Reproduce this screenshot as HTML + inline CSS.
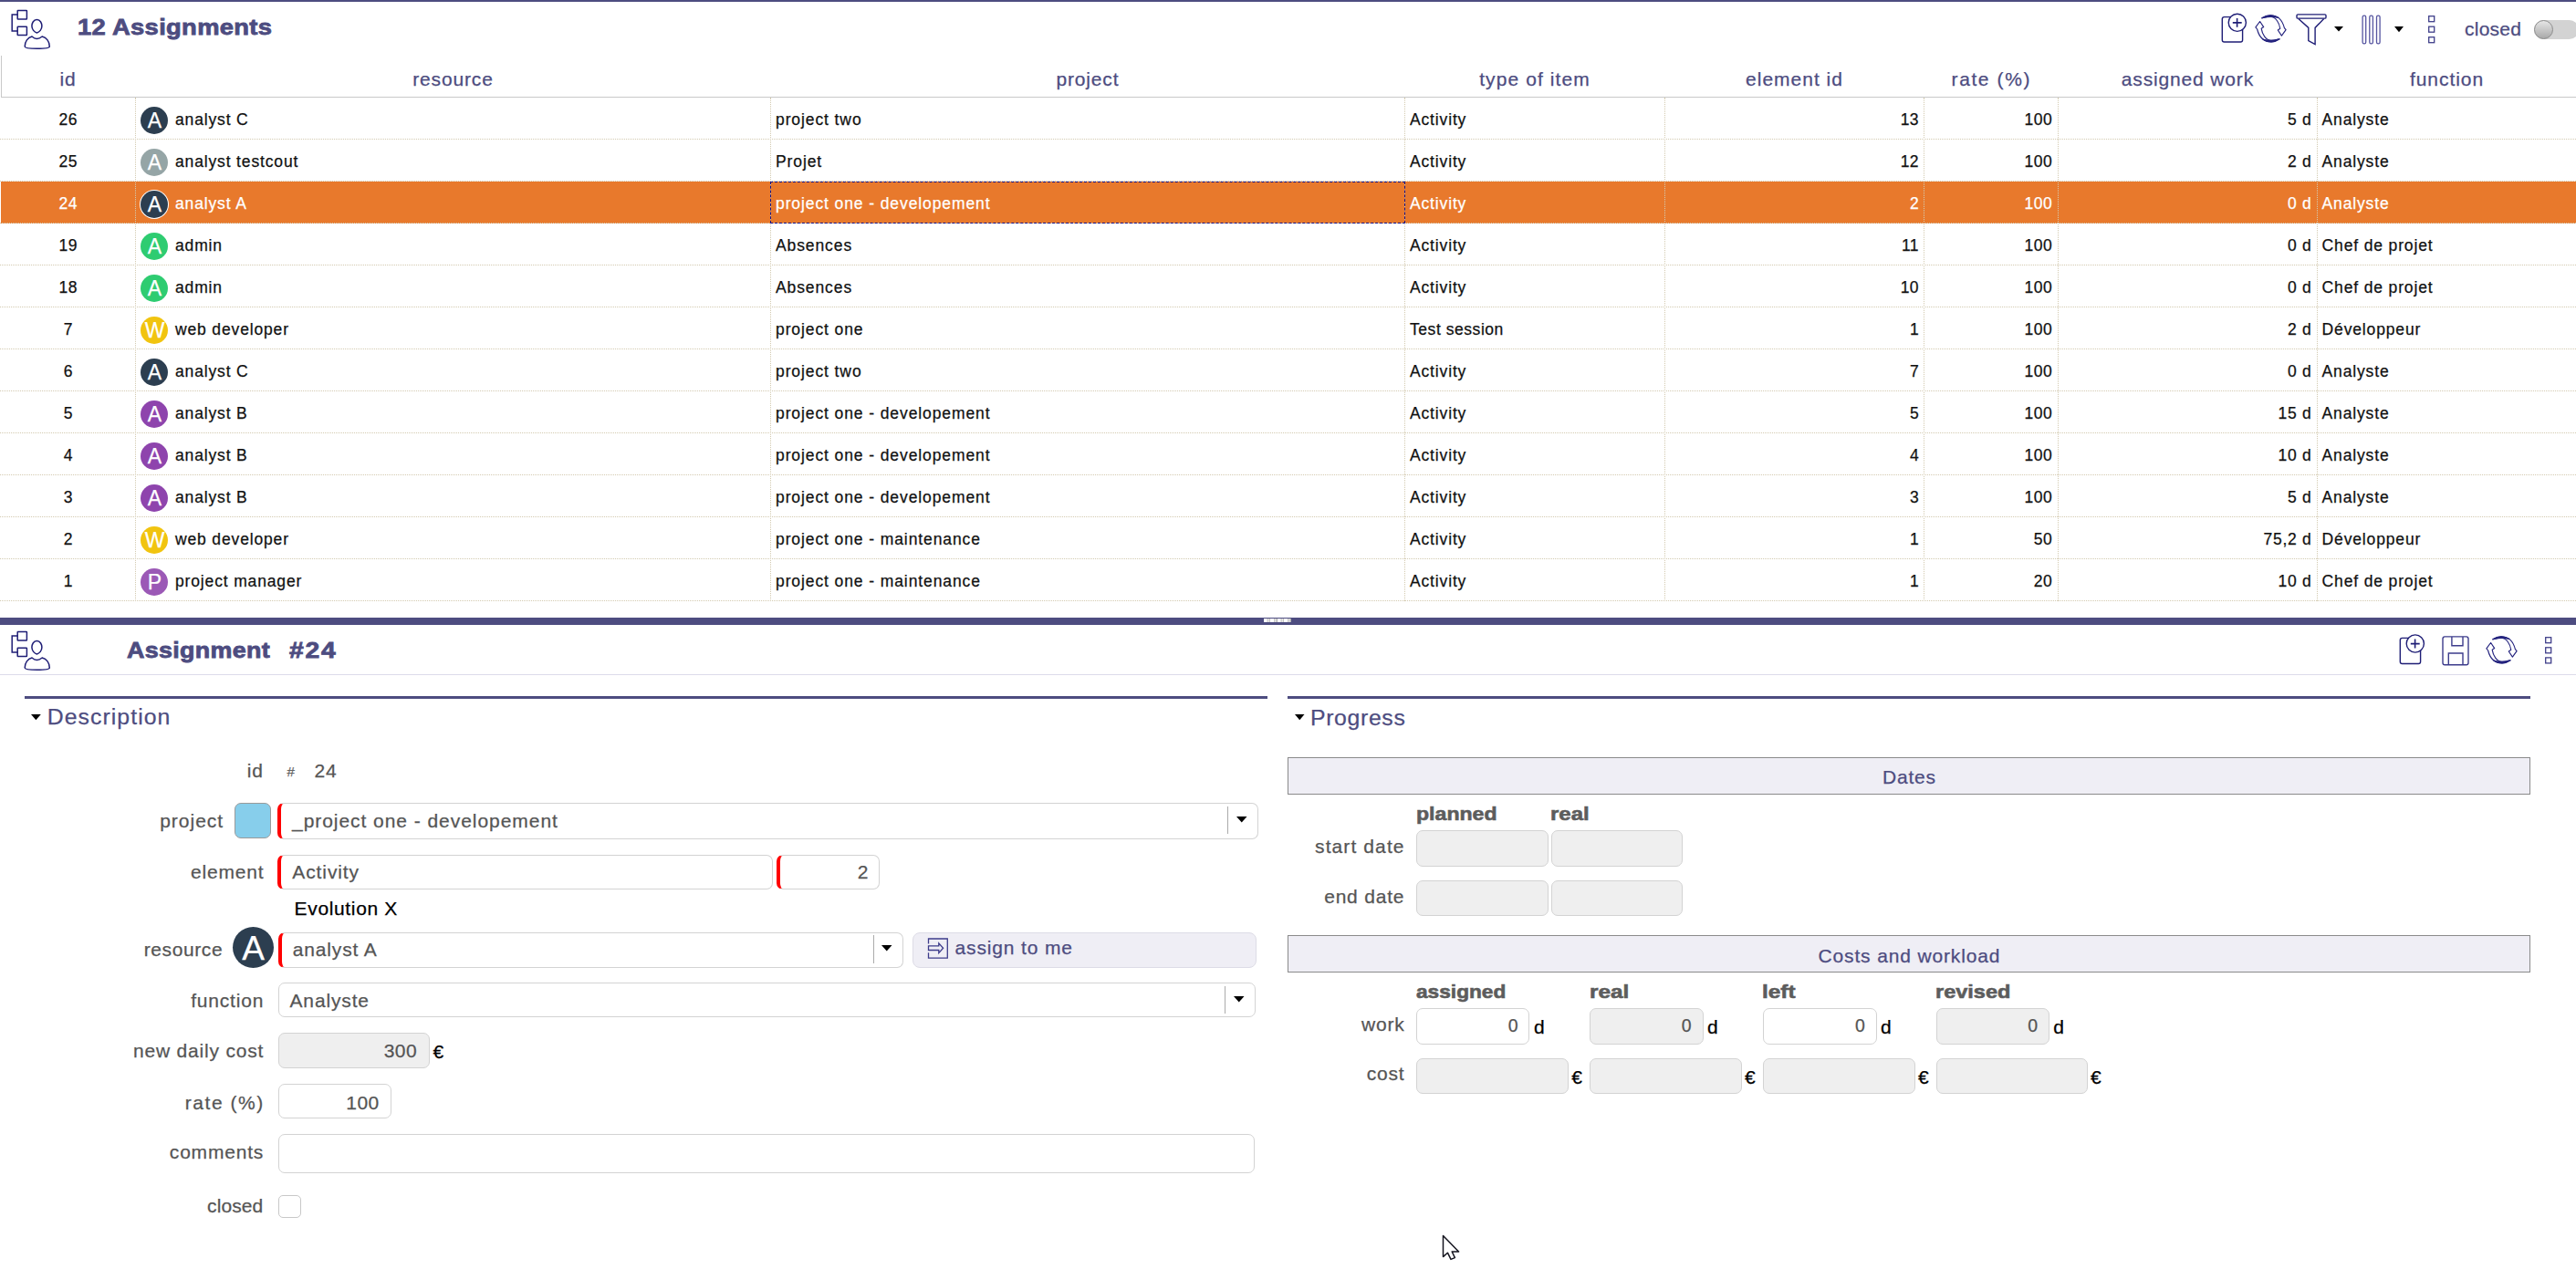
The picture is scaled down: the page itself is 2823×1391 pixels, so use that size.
<!DOCTYPE html>
<html><head><meta charset="utf-8"><title>Assignments</title>
<style>
html,body{margin:0;padding:0;background:#fff;}
body{width:2823px;height:1391px;overflow:hidden;position:relative;font-family:'Liberation Sans', sans-serif;}
.t{position:absolute;white-space:nowrap;-webkit-text-stroke:0.25px currentColor;}
.b{position:absolute;box-sizing:border-box;}
svg{position:absolute;overflow:visible;}
</style></head><body>

<div class="b" style="left:0px;top:0px;width:2823px;height:2px;background:#4d4c80;"></div>
<svg style="left:8px;top:6px" width="52" height="52" viewBox="0 0 52 52" fill="none" stroke="#1f1e76" stroke-width="1.5">
<rect x="11.2" y="5.6" width="10.2" height="9.3" rx="0.5"/>
<rect x="11.2" y="23.2" width="10.2" height="9.3" rx="0.5"/>
<path d="M11.2 9.9 H5.2 V28 H11.2"/>
<path d="M32.4 15.6 C36.3 15.6 37.9 19.6 37.9 22.6 C37.9 26.2 35.2 29.3 32.4 30 C29.6 29.3 26.9 26.2 26.9 22.6 C26.9 19.6 28.5 15.6 32.4 15.6 Z"/>
<path d="M27 34 C28.8 35.6 30.6 36.4 32.4 36.4 C34.2 36.4 36.2 35.6 38.2 34 C43 35.2 46.3 39.6 46.3 45 C46.3 46.6 39.8 47.3 32.6 47.3 C25.4 47.3 19.2 46.6 19.2 45 C19.2 39.6 22.4 35.2 27 34 Z"/>
</svg>
<div class="t" style="top:17.81px;font-size:24.2px;line-height:24.2px;color:#4d4c80;font-weight:bold;letter-spacing:0.3px;left:85.20px;-webkit-text-stroke:0.8px #4d4c80;transform:scaleX(1.13);transform-origin:0 0;">12 Assignments</div>
<svg style="left:2425px;top:8px" width="40" height="45" viewBox="0 0 40 45" fill="none" stroke="#1f1e76" stroke-width="1.4">
<rect x="10.3" y="10.6" width="22.3" height="27.4" rx="2.2"/>
<circle cx="26.8" cy="16.8" r="9.6" fill="#fff"/>
<path d="M21.8 16.900000000000002 H31.7 M26.6 11.9 V21.8" stroke-width="1.6"/>
</svg>
<svg style="left:2466px;top:12px" width="45" height="40" viewBox="0 0 45 40" fill="none" stroke="#24237e" stroke-width="1.15" stroke-linejoin="round">
<path d="M12.9 7.8 C16 5.7 19 4.7 22 4.7 C29 4.7 35 9.2 37.4 18.6 L39.1 20.7 L34.4 27.1 L30.3 21 L32.8 19.3 C31.8 13 28 6.4 22 6.3 C18.5 6.3 15.5 7.2 12.9 7.8 Z"/><path d="M12.9 7.8 C16 5.7 19 4.7 22 4.7 C25.5 4.7 28.5 5.8 31 7.4 C28 6.7 25 6.3 22 6.3 C18.5 6.3 15.5 7.2 12.9 7.8 Z" fill="#24237e"/>
<g transform="rotate(180 22.5 19.3)"><path d="M12.9 7.8 C16 5.7 19 4.7 22 4.7 C29 4.7 35 9.2 37.4 18.6 L39.1 20.7 L34.4 27.1 L30.3 21 L32.8 19.3 C31.8 13 28 6.4 22 6.3 C18.5 6.3 15.5 7.2 12.9 7.8 Z"/><path d="M12.9 7.8 C16 5.7 19 4.7 22 4.7 C25.5 4.7 28.5 5.8 31 7.4 C28 6.7 25 6.3 22 6.3 C18.5 6.3 15.5 7.2 12.9 7.8 Z" fill="#24237e"/></g>
</svg>
<svg style="left:2516px;top:8px" width="40" height="40" viewBox="91 0 40 40" fill="none" stroke="#1f1e76" stroke-width="1.4">
<rect x="92" y="7.9" width="32" height="4.2" rx="1.2"/>
<path d="M93.8 12.5 L104.8 22.4 V36.7 L112.1 40.5 V22.4 L121.7 12.5"/>
</svg>
<svg style="left:2558px;top:29.3px" width="10" height="5.4999999999999964" viewBox="0 0 10 5.4999999999999964"><path d="M0 0 H10 L5.0 5.4999999999999964 Z" fill="#000"/></svg>
<svg style="left:2575px;top:8px" width="40" height="40" viewBox="0 0 40 40" fill="none" stroke="#5655a0" stroke-width="1.3">
<rect x="14.1" y="9.1" width="3.6" height="30.7" rx="1.6"/>
<rect x="21.8" y="9.1" width="3.6" height="30.7" rx="1.6"/>
<rect x="29.5" y="9.1" width="3.6" height="30.7" rx="1.6"/>
</svg>
<svg style="left:2624px;top:28.7px" width="10" height="6.300000000000001" viewBox="0 0 10 6.300000000000001"><path d="M0 0 H10 L5.0 6.300000000000001 Z" fill="#000"/></svg>
<svg style="left:2661px;top:17px" width="10" height="34" viewBox="0 0 10 34" fill="none" stroke="#1f1e76" stroke-width="1.3" opacity="0.85">
<rect x="0.7" y="0.7" width="6" height="6"/>
<rect x="0.7" y="12.2" width="6" height="6"/>
<rect x="0.7" y="23.7" width="6" height="6"/>
</svg>
<div class="t" style="top:21.02px;font-size:21px;line-height:21px;color:#4d4c80;letter-spacing:0.25px;left:2701.00px;">closed</div>
<div class="b" style="left:2777px;top:22px;width:49px;height:20.6px;background:#d3d3d3;border-radius:11px;"></div>
<div class="b" style="left:2777px;top:22px;width:21px;height:21px;border-radius:50%;border:1px solid #8c8c8c;background:linear-gradient(#e6e6e6,#a9a9a9);"></div>
<div class="b" style="left:1px;top:61px;width:1px;height:46px;background:#c9c9c9;"></div>
<div class="b" style="left:1px;top:106px;width:2822px;height:1px;background:#c9c9c9;"></div>
<div class="t" style="top:76.22px;font-size:21px;line-height:21px;color:#4d4c80;letter-spacing:0.85px;left:-525.58px;width:1200px;text-align:center;">id</div>
<div class="t" style="top:76.22px;font-size:21px;line-height:21px;color:#4d4c80;letter-spacing:0.85px;left:-103.58px;width:1200px;text-align:center;">resource</div>
<div class="t" style="top:76.22px;font-size:21px;line-height:21px;color:#4d4c80;letter-spacing:0.85px;left:591.92px;width:1200px;text-align:center;">project</div>
<div class="t" style="top:76.22px;font-size:21px;line-height:21px;color:#4d4c80;letter-spacing:1.1px;left:1082.05px;width:1200px;text-align:center;">type of item</div>
<div class="t" style="top:76.22px;font-size:21px;line-height:21px;color:#4d4c80;letter-spacing:1.0px;left:1366.50px;width:1200px;text-align:center;">element id</div>
<div class="t" style="top:76.22px;font-size:21px;line-height:21px;color:#4d4c80;letter-spacing:1.6px;left:1582.30px;width:1200px;text-align:center;">rate (%)</div>
<div class="t" style="top:76.22px;font-size:21px;line-height:21px;color:#4d4c80;letter-spacing:0.85px;left:1797.42px;width:1200px;text-align:center;">assigned work</div>
<div class="t" style="top:76.22px;font-size:21px;line-height:21px;color:#4d4c80;letter-spacing:0.95px;left:2081.47px;width:1200px;text-align:center;">function</div>
<div class="b" style="left:1px;top:199px;width:2822px;height:46px;background:#e8792c;"></div>
<div class="b" style="left:0px;top:152px;width:2823px;height:1px;border-top:1px dotted #d3cab0;"></div>
<div class="b" style="left:0px;top:198px;width:2823px;height:1px;border-top:1px dotted #d3cab0;"></div>
<div class="b" style="left:0px;top:244px;width:2823px;height:1px;border-top:1px dotted #d3cab0;"></div>
<div class="b" style="left:0px;top:290px;width:2823px;height:1px;border-top:1px dotted #d3cab0;"></div>
<div class="b" style="left:0px;top:336px;width:2823px;height:1px;border-top:1px dotted #d3cab0;"></div>
<div class="b" style="left:0px;top:382px;width:2823px;height:1px;border-top:1px dotted #d3cab0;"></div>
<div class="b" style="left:0px;top:428px;width:2823px;height:1px;border-top:1px dotted #d3cab0;"></div>
<div class="b" style="left:0px;top:474px;width:2823px;height:1px;border-top:1px dotted #d3cab0;"></div>
<div class="b" style="left:0px;top:520px;width:2823px;height:1px;border-top:1px dotted #d3cab0;"></div>
<div class="b" style="left:0px;top:566px;width:2823px;height:1px;border-top:1px dotted #d3cab0;"></div>
<div class="b" style="left:0px;top:612px;width:2823px;height:1px;border-top:1px dotted #d3cab0;"></div>
<div class="b" style="left:0px;top:658px;width:2823px;height:1px;border-top:1px dotted #d3cab0;"></div>
<div class="b" style="left:148px;top:107px;width:1px;height:552px;border-left:1px dotted #d3cab0;"></div>
<div class="b" style="left:844px;top:107px;width:1px;height:552px;border-left:1px dotted #d3cab0;"></div>
<div class="b" style="left:1539px;top:107px;width:1px;height:552px;border-left:1px dotted #d3cab0;"></div>
<div class="b" style="left:1824px;top:107px;width:1px;height:552px;border-left:1px dotted #d3cab0;"></div>
<div class="b" style="left:2108px;top:107px;width:1px;height:552px;border-left:1px dotted #d3cab0;"></div>
<div class="b" style="left:2255px;top:107px;width:1px;height:552px;border-left:1px dotted #d3cab0;"></div>
<div class="b" style="left:2539px;top:107px;width:1px;height:552px;border-left:1px dotted #d3cab0;"></div>
<div class="b" style="left:844px;top:199px;width:696px;height:46px;border:1px dashed #14148a;"></div>
<div class="t" style="top:123.39px;font-size:17.5px;line-height:17.5px;color:#111;letter-spacing:0.5px;left:-525.25px;width:1200px;text-align:center;">26</div>
<div class="b" style="left:154px;top:117px;width:30px;height:30px;border-radius:50%;background:#2c3e50;"></div>
<div class="t" style="top:120.53px;font-size:23px;line-height:23px;color:#fff;left:-430.50px;width:1200px;text-align:center;">A</div>
<div class="t" style="top:123.39px;font-size:17.5px;line-height:17.5px;color:#111;letter-spacing:0.85px;left:192.00px;">analyst C</div>
<div class="t" style="top:123.39px;font-size:17.5px;line-height:17.5px;color:#111;letter-spacing:0.9px;left:850.00px;">project two</div>
<div class="t" style="top:123.39px;font-size:17.5px;line-height:17.5px;color:#111;letter-spacing:0.85px;left:1545.00px;">Activity</div>
<div class="t" style="top:123.39px;font-size:17.5px;line-height:17.5px;color:#111;letter-spacing:0.5px;right:719.90px;">13</div>
<div class="t" style="top:123.39px;font-size:17.5px;line-height:17.5px;color:#111;letter-spacing:0.5px;right:573.70px;">100</div>
<div class="t" style="top:123.39px;font-size:17.5px;line-height:17.5px;color:#111;letter-spacing:0.7px;right:289.60px;">5 d</div>
<div class="t" style="top:123.39px;font-size:17.5px;line-height:17.5px;color:#111;letter-spacing:0.85px;left:2544.60px;">Analyste</div>
<div class="t" style="top:169.39px;font-size:17.5px;line-height:17.5px;color:#111;letter-spacing:0.5px;left:-525.25px;width:1200px;text-align:center;">25</div>
<div class="b" style="left:154px;top:163px;width:30px;height:30px;border-radius:50%;background:#95a5a6;"></div>
<div class="t" style="top:166.53px;font-size:23px;line-height:23px;color:#fff;left:-430.50px;width:1200px;text-align:center;">A</div>
<div class="t" style="top:169.39px;font-size:17.5px;line-height:17.5px;color:#111;letter-spacing:0.85px;left:192.00px;">analyst testcout</div>
<div class="t" style="top:169.39px;font-size:17.5px;line-height:17.5px;color:#111;letter-spacing:0.9px;left:850.00px;">Projet</div>
<div class="t" style="top:169.39px;font-size:17.5px;line-height:17.5px;color:#111;letter-spacing:0.85px;left:1545.00px;">Activity</div>
<div class="t" style="top:169.39px;font-size:17.5px;line-height:17.5px;color:#111;letter-spacing:0.5px;right:719.90px;">12</div>
<div class="t" style="top:169.39px;font-size:17.5px;line-height:17.5px;color:#111;letter-spacing:0.5px;right:573.70px;">100</div>
<div class="t" style="top:169.39px;font-size:17.5px;line-height:17.5px;color:#111;letter-spacing:0.7px;right:289.60px;">2 d</div>
<div class="t" style="top:169.39px;font-size:17.5px;line-height:17.5px;color:#111;letter-spacing:0.85px;left:2544.60px;">Analyste</div>
<div class="t" style="top:215.39px;font-size:17.5px;line-height:17.5px;color:#fff;letter-spacing:0.5px;left:-525.25px;width:1200px;text-align:center;">24</div>
<div class="b" style="left:154px;top:209px;width:30px;height:30px;border-radius:50%;background:#2c3e50;box-shadow:0 0 0 1px #fff;"></div>
<div class="t" style="top:212.53px;font-size:23px;line-height:23px;color:#fff;left:-430.50px;width:1200px;text-align:center;">A</div>
<div class="t" style="top:215.39px;font-size:17.5px;line-height:17.5px;color:#fff;letter-spacing:0.85px;left:192.00px;">analyst A</div>
<div class="t" style="top:215.39px;font-size:17.5px;line-height:17.5px;color:#fff;letter-spacing:0.9px;left:850.00px;">project one - developement</div>
<div class="t" style="top:215.39px;font-size:17.5px;line-height:17.5px;color:#fff;letter-spacing:0.85px;left:1545.00px;">Activity</div>
<div class="t" style="top:215.39px;font-size:17.5px;line-height:17.5px;color:#fff;letter-spacing:0.5px;right:719.90px;">2</div>
<div class="t" style="top:215.39px;font-size:17.5px;line-height:17.5px;color:#fff;letter-spacing:0.5px;right:573.70px;">100</div>
<div class="t" style="top:215.39px;font-size:17.5px;line-height:17.5px;color:#fff;letter-spacing:0.7px;right:289.60px;">0 d</div>
<div class="t" style="top:215.39px;font-size:17.5px;line-height:17.5px;color:#fff;letter-spacing:0.85px;left:2544.60px;">Analyste</div>
<div class="t" style="top:261.39px;font-size:17.5px;line-height:17.5px;color:#111;letter-spacing:0.5px;left:-525.25px;width:1200px;text-align:center;">19</div>
<div class="b" style="left:154px;top:255px;width:30px;height:30px;border-radius:50%;background:#2ecc71;"></div>
<div class="t" style="top:258.53px;font-size:23px;line-height:23px;color:#fff;left:-430.50px;width:1200px;text-align:center;">A</div>
<div class="t" style="top:261.39px;font-size:17.5px;line-height:17.5px;color:#111;letter-spacing:0.85px;left:192.00px;">admin</div>
<div class="t" style="top:261.39px;font-size:17.5px;line-height:17.5px;color:#111;letter-spacing:0.9px;left:850.00px;">Absences</div>
<div class="t" style="top:261.39px;font-size:17.5px;line-height:17.5px;color:#111;letter-spacing:0.85px;left:1545.00px;">Activity</div>
<div class="t" style="top:261.39px;font-size:17.5px;line-height:17.5px;color:#111;letter-spacing:0.5px;right:719.90px;">11</div>
<div class="t" style="top:261.39px;font-size:17.5px;line-height:17.5px;color:#111;letter-spacing:0.5px;right:573.70px;">100</div>
<div class="t" style="top:261.39px;font-size:17.5px;line-height:17.5px;color:#111;letter-spacing:0.7px;right:289.60px;">0 d</div>
<div class="t" style="top:261.39px;font-size:17.5px;line-height:17.5px;color:#111;letter-spacing:0.85px;left:2544.60px;">Chef de projet</div>
<div class="t" style="top:307.39px;font-size:17.5px;line-height:17.5px;color:#111;letter-spacing:0.5px;left:-525.25px;width:1200px;text-align:center;">18</div>
<div class="b" style="left:154px;top:301px;width:30px;height:30px;border-radius:50%;background:#2ecc71;"></div>
<div class="t" style="top:304.53px;font-size:23px;line-height:23px;color:#fff;left:-430.50px;width:1200px;text-align:center;">A</div>
<div class="t" style="top:307.39px;font-size:17.5px;line-height:17.5px;color:#111;letter-spacing:0.85px;left:192.00px;">admin</div>
<div class="t" style="top:307.39px;font-size:17.5px;line-height:17.5px;color:#111;letter-spacing:0.9px;left:850.00px;">Absences</div>
<div class="t" style="top:307.39px;font-size:17.5px;line-height:17.5px;color:#111;letter-spacing:0.85px;left:1545.00px;">Activity</div>
<div class="t" style="top:307.39px;font-size:17.5px;line-height:17.5px;color:#111;letter-spacing:0.5px;right:719.90px;">10</div>
<div class="t" style="top:307.39px;font-size:17.5px;line-height:17.5px;color:#111;letter-spacing:0.5px;right:573.70px;">100</div>
<div class="t" style="top:307.39px;font-size:17.5px;line-height:17.5px;color:#111;letter-spacing:0.7px;right:289.60px;">0 d</div>
<div class="t" style="top:307.39px;font-size:17.5px;line-height:17.5px;color:#111;letter-spacing:0.85px;left:2544.60px;">Chef de projet</div>
<div class="t" style="top:353.39px;font-size:17.5px;line-height:17.5px;color:#111;letter-spacing:0.5px;left:-525.25px;width:1200px;text-align:center;">7</div>
<div class="b" style="left:154px;top:347px;width:30px;height:30px;border-radius:50%;background:#f1c40f;"></div>
<div class="t" style="top:350.53px;font-size:23px;line-height:23px;color:#fff;left:-430.50px;width:1200px;text-align:center;">W</div>
<div class="t" style="top:353.39px;font-size:17.5px;line-height:17.5px;color:#111;letter-spacing:0.85px;left:192.00px;">web developer</div>
<div class="t" style="top:353.39px;font-size:17.5px;line-height:17.5px;color:#111;letter-spacing:0.9px;left:850.00px;">project one</div>
<div class="t" style="top:353.39px;font-size:17.5px;line-height:17.5px;color:#111;letter-spacing:0.55px;left:1545.00px;">Test session</div>
<div class="t" style="top:353.39px;font-size:17.5px;line-height:17.5px;color:#111;letter-spacing:0.5px;right:719.90px;">1</div>
<div class="t" style="top:353.39px;font-size:17.5px;line-height:17.5px;color:#111;letter-spacing:0.5px;right:573.70px;">100</div>
<div class="t" style="top:353.39px;font-size:17.5px;line-height:17.5px;color:#111;letter-spacing:0.7px;right:289.60px;">2 d</div>
<div class="t" style="top:353.39px;font-size:17.5px;line-height:17.5px;color:#111;letter-spacing:0.85px;left:2544.60px;">Développeur</div>
<div class="t" style="top:399.39px;font-size:17.5px;line-height:17.5px;color:#111;letter-spacing:0.5px;left:-525.25px;width:1200px;text-align:center;">6</div>
<div class="b" style="left:154px;top:393px;width:30px;height:30px;border-radius:50%;background:#2c3e50;"></div>
<div class="t" style="top:396.53px;font-size:23px;line-height:23px;color:#fff;left:-430.50px;width:1200px;text-align:center;">A</div>
<div class="t" style="top:399.39px;font-size:17.5px;line-height:17.5px;color:#111;letter-spacing:0.85px;left:192.00px;">analyst C</div>
<div class="t" style="top:399.39px;font-size:17.5px;line-height:17.5px;color:#111;letter-spacing:0.9px;left:850.00px;">project two</div>
<div class="t" style="top:399.39px;font-size:17.5px;line-height:17.5px;color:#111;letter-spacing:0.85px;left:1545.00px;">Activity</div>
<div class="t" style="top:399.39px;font-size:17.5px;line-height:17.5px;color:#111;letter-spacing:0.5px;right:719.90px;">7</div>
<div class="t" style="top:399.39px;font-size:17.5px;line-height:17.5px;color:#111;letter-spacing:0.5px;right:573.70px;">100</div>
<div class="t" style="top:399.39px;font-size:17.5px;line-height:17.5px;color:#111;letter-spacing:0.7px;right:289.60px;">0 d</div>
<div class="t" style="top:399.39px;font-size:17.5px;line-height:17.5px;color:#111;letter-spacing:0.85px;left:2544.60px;">Analyste</div>
<div class="t" style="top:445.39px;font-size:17.5px;line-height:17.5px;color:#111;letter-spacing:0.5px;left:-525.25px;width:1200px;text-align:center;">5</div>
<div class="b" style="left:154px;top:439px;width:30px;height:30px;border-radius:50%;background:#8e44ad;"></div>
<div class="t" style="top:442.53px;font-size:23px;line-height:23px;color:#fff;left:-430.50px;width:1200px;text-align:center;">A</div>
<div class="t" style="top:445.39px;font-size:17.5px;line-height:17.5px;color:#111;letter-spacing:0.85px;left:192.00px;">analyst B</div>
<div class="t" style="top:445.39px;font-size:17.5px;line-height:17.5px;color:#111;letter-spacing:0.9px;left:850.00px;">project one - developement</div>
<div class="t" style="top:445.39px;font-size:17.5px;line-height:17.5px;color:#111;letter-spacing:0.85px;left:1545.00px;">Activity</div>
<div class="t" style="top:445.39px;font-size:17.5px;line-height:17.5px;color:#111;letter-spacing:0.5px;right:719.90px;">5</div>
<div class="t" style="top:445.39px;font-size:17.5px;line-height:17.5px;color:#111;letter-spacing:0.5px;right:573.70px;">100</div>
<div class="t" style="top:445.39px;font-size:17.5px;line-height:17.5px;color:#111;letter-spacing:0.7px;right:289.60px;">15 d</div>
<div class="t" style="top:445.39px;font-size:17.5px;line-height:17.5px;color:#111;letter-spacing:0.85px;left:2544.60px;">Analyste</div>
<div class="t" style="top:491.39px;font-size:17.5px;line-height:17.5px;color:#111;letter-spacing:0.5px;left:-525.25px;width:1200px;text-align:center;">4</div>
<div class="b" style="left:154px;top:485px;width:30px;height:30px;border-radius:50%;background:#8e44ad;"></div>
<div class="t" style="top:488.53px;font-size:23px;line-height:23px;color:#fff;left:-430.50px;width:1200px;text-align:center;">A</div>
<div class="t" style="top:491.39px;font-size:17.5px;line-height:17.5px;color:#111;letter-spacing:0.85px;left:192.00px;">analyst B</div>
<div class="t" style="top:491.39px;font-size:17.5px;line-height:17.5px;color:#111;letter-spacing:0.9px;left:850.00px;">project one - developement</div>
<div class="t" style="top:491.39px;font-size:17.5px;line-height:17.5px;color:#111;letter-spacing:0.85px;left:1545.00px;">Activity</div>
<div class="t" style="top:491.39px;font-size:17.5px;line-height:17.5px;color:#111;letter-spacing:0.5px;right:719.90px;">4</div>
<div class="t" style="top:491.39px;font-size:17.5px;line-height:17.5px;color:#111;letter-spacing:0.5px;right:573.70px;">100</div>
<div class="t" style="top:491.39px;font-size:17.5px;line-height:17.5px;color:#111;letter-spacing:0.7px;right:289.60px;">10 d</div>
<div class="t" style="top:491.39px;font-size:17.5px;line-height:17.5px;color:#111;letter-spacing:0.85px;left:2544.60px;">Analyste</div>
<div class="t" style="top:537.39px;font-size:17.5px;line-height:17.5px;color:#111;letter-spacing:0.5px;left:-525.25px;width:1200px;text-align:center;">3</div>
<div class="b" style="left:154px;top:531px;width:30px;height:30px;border-radius:50%;background:#8e44ad;"></div>
<div class="t" style="top:534.53px;font-size:23px;line-height:23px;color:#fff;left:-430.50px;width:1200px;text-align:center;">A</div>
<div class="t" style="top:537.39px;font-size:17.5px;line-height:17.5px;color:#111;letter-spacing:0.85px;left:192.00px;">analyst B</div>
<div class="t" style="top:537.39px;font-size:17.5px;line-height:17.5px;color:#111;letter-spacing:0.9px;left:850.00px;">project one - developement</div>
<div class="t" style="top:537.39px;font-size:17.5px;line-height:17.5px;color:#111;letter-spacing:0.85px;left:1545.00px;">Activity</div>
<div class="t" style="top:537.39px;font-size:17.5px;line-height:17.5px;color:#111;letter-spacing:0.5px;right:719.90px;">3</div>
<div class="t" style="top:537.39px;font-size:17.5px;line-height:17.5px;color:#111;letter-spacing:0.5px;right:573.70px;">100</div>
<div class="t" style="top:537.39px;font-size:17.5px;line-height:17.5px;color:#111;letter-spacing:0.7px;right:289.60px;">5 d</div>
<div class="t" style="top:537.39px;font-size:17.5px;line-height:17.5px;color:#111;letter-spacing:0.85px;left:2544.60px;">Analyste</div>
<div class="t" style="top:583.39px;font-size:17.5px;line-height:17.5px;color:#111;letter-spacing:0.5px;left:-525.25px;width:1200px;text-align:center;">2</div>
<div class="b" style="left:154px;top:577px;width:30px;height:30px;border-radius:50%;background:#f1c40f;"></div>
<div class="t" style="top:580.53px;font-size:23px;line-height:23px;color:#fff;left:-430.50px;width:1200px;text-align:center;">W</div>
<div class="t" style="top:583.39px;font-size:17.5px;line-height:17.5px;color:#111;letter-spacing:0.85px;left:192.00px;">web developer</div>
<div class="t" style="top:583.39px;font-size:17.5px;line-height:17.5px;color:#111;letter-spacing:0.9px;left:850.00px;">project one - maintenance</div>
<div class="t" style="top:583.39px;font-size:17.5px;line-height:17.5px;color:#111;letter-spacing:0.85px;left:1545.00px;">Activity</div>
<div class="t" style="top:583.39px;font-size:17.5px;line-height:17.5px;color:#111;letter-spacing:0.5px;right:719.90px;">1</div>
<div class="t" style="top:583.39px;font-size:17.5px;line-height:17.5px;color:#111;letter-spacing:0.5px;right:573.70px;">50</div>
<div class="t" style="top:583.39px;font-size:17.5px;line-height:17.5px;color:#111;letter-spacing:0.7px;right:289.60px;">75,2 d</div>
<div class="t" style="top:583.39px;font-size:17.5px;line-height:17.5px;color:#111;letter-spacing:0.85px;left:2544.60px;">Développeur</div>
<div class="t" style="top:629.39px;font-size:17.5px;line-height:17.5px;color:#111;letter-spacing:0.5px;left:-525.25px;width:1200px;text-align:center;">1</div>
<div class="b" style="left:154px;top:623px;width:30px;height:30px;border-radius:50%;background:#9b59b6;"></div>
<div class="t" style="top:626.53px;font-size:23px;line-height:23px;color:#fff;left:-430.50px;width:1200px;text-align:center;">P</div>
<div class="t" style="top:629.39px;font-size:17.5px;line-height:17.5px;color:#111;letter-spacing:0.85px;left:192.00px;">project manager</div>
<div class="t" style="top:629.39px;font-size:17.5px;line-height:17.5px;color:#111;letter-spacing:0.9px;left:850.00px;">project one - maintenance</div>
<div class="t" style="top:629.39px;font-size:17.5px;line-height:17.5px;color:#111;letter-spacing:0.85px;left:1545.00px;">Activity</div>
<div class="t" style="top:629.39px;font-size:17.5px;line-height:17.5px;color:#111;letter-spacing:0.5px;right:719.90px;">1</div>
<div class="t" style="top:629.39px;font-size:17.5px;line-height:17.5px;color:#111;letter-spacing:0.5px;right:573.70px;">20</div>
<div class="t" style="top:629.39px;font-size:17.5px;line-height:17.5px;color:#111;letter-spacing:0.7px;right:289.60px;">10 d</div>
<div class="t" style="top:629.39px;font-size:17.5px;line-height:17.5px;color:#111;letter-spacing:0.85px;left:2544.60px;">Chef de projet</div>
<div class="b" style="left:0px;top:677px;width:2823px;height:8px;background:#4d4c80;"></div>
<div class="b" style="left:1385px;top:678px;width:30px;height:4px;background:repeating-linear-gradient(90deg,#fff 0px,#fff 3px,#c8c8c8 4px,#e8e8e8 5.5px,#b0b0b0 7px,#fff 7.5px);"></div>
<svg style="left:8px;top:686.5px" width="52" height="52" viewBox="0 0 52 52" fill="none" stroke="#1f1e76" stroke-width="1.5">
<rect x="11.2" y="5.6" width="10.2" height="9.3" rx="0.5"/>
<rect x="11.2" y="23.2" width="10.2" height="9.3" rx="0.5"/>
<path d="M11.2 9.9 H5.2 V28 H11.2"/>
<path d="M32.4 15.6 C36.3 15.6 37.9 19.6 37.9 22.6 C37.9 26.2 35.2 29.3 32.4 30 C29.6 29.3 26.9 26.2 26.9 22.6 C26.9 19.6 28.5 15.6 32.4 15.6 Z"/>
<path d="M27 34 C28.8 35.6 30.6 36.4 32.4 36.4 C34.2 36.4 36.2 35.6 38.2 34 C43 35.2 46.3 39.6 46.3 45 C46.3 46.6 39.8 47.3 32.6 47.3 C25.4 47.3 19.2 46.6 19.2 45 C19.2 39.6 22.4 35.2 27 34 Z"/>
</svg>
<div class="t" style="top:700.91px;font-size:24.2px;line-height:24.2px;color:#4d4c80;font-weight:bold;letter-spacing:0.3px;left:139.10px;-webkit-text-stroke:0.8px #4d4c80;transform:scaleX(1.11);transform-origin:0 0;">Assignment</div>
<div class="t" style="top:700.91px;font-size:24.2px;line-height:24.2px;color:#4d4c80;font-weight:bold;letter-spacing:1.5px;left:316.60px;-webkit-text-stroke:0.8px #4d4c80;transform:scaleX(1.17);transform-origin:0 0;">#24</div>
<svg style="left:2620px;top:688px" width="40" height="45" viewBox="0 0 40 45" fill="none" stroke="#1f1e76" stroke-width="1.4">
<rect x="10.3" y="11.4" width="22.3" height="28.1" rx="2.2"/>
<circle cx="26.8" cy="17.5" r="9.6" fill="#fff"/>
<path d="M21.8 17.6 H31.7 M26.6 12.6 V22.5" stroke-width="1.6"/>
</svg>
<svg style="left:2620px;top:688px" width="90" height="45" viewBox="0 0 90 45" fill="none" stroke="#3d3c8c" stroke-width="1.4">
<rect x="57" y="9.9" width="28" height="30.8" rx="2.2"/>
<path d="M66.9 10 V19.7 H79 V10"/>
<path d="M63.3 40.6 V28 H79 V40.6"/>
</svg>
<svg style="left:2718.7px;top:693px" width="45" height="40" viewBox="0 0 45 40" fill="none" stroke="#24237e" stroke-width="1.15" stroke-linejoin="round">
<path d="M12.9 7.8 C16 5.7 19 4.7 22 4.7 C29 4.7 35 9.2 37.4 18.6 L39.1 20.7 L34.4 27.1 L30.3 21 L32.8 19.3 C31.8 13 28 6.4 22 6.3 C18.5 6.3 15.5 7.2 12.9 7.8 Z"/><path d="M12.9 7.8 C16 5.7 19 4.7 22 4.7 C25.5 4.7 28.5 5.8 31 7.4 C28 6.7 25 6.3 22 6.3 C18.5 6.3 15.5 7.2 12.9 7.8 Z" fill="#24237e"/>
<g transform="rotate(180 22.5 19.3)"><path d="M12.9 7.8 C16 5.7 19 4.7 22 4.7 C29 4.7 35 9.2 37.4 18.6 L39.1 20.7 L34.4 27.1 L30.3 21 L32.8 19.3 C31.8 13 28 6.4 22 6.3 C18.5 6.3 15.5 7.2 12.9 7.8 Z"/><path d="M12.9 7.8 C16 5.7 19 4.7 22 4.7 C25.5 4.7 28.5 5.8 31 7.4 C28 6.7 25 6.3 22 6.3 C18.5 6.3 15.5 7.2 12.9 7.8 Z" fill="#24237e"/></g>
</svg>
<svg style="left:2788.5px;top:698px" width="10" height="34" viewBox="0 0 10 34" fill="none" stroke="#1f1e76" stroke-width="1.3" opacity="0.85">
<rect x="0.7" y="0.7" width="6" height="6"/>
<rect x="0.7" y="11.799999999999999" width="6" height="6"/>
<rect x="0.7" y="22.9" width="6" height="6"/>
</svg>
<div class="b" style="left:0px;top:739px;width:2823px;height:1px;background:#dcdbea;"></div>
<div class="b" style="left:27px;top:763px;width:1362px;height:3px;background:#4d4c80;"></div>
<div class="b" style="left:1411px;top:763px;width:1362px;height:3px;background:#4d4c80;"></div>
<svg style="left:34px;top:783.3px" width="10.799999999999997" height="6.300000000000068" viewBox="0 0 10.799999999999997 6.300000000000068"><path d="M0 0 H10.799999999999997 L5.399999999999999 6.300000000000068 Z" fill="#000"/></svg>
<div class="t" style="top:773.81px;font-size:24.8px;line-height:24.8px;color:#4d4c80;letter-spacing:1.05px;left:51.80px;">Description</div>
<svg style="left:1418.8px;top:783.3px" width="10.5" height="6.300000000000068" viewBox="0 0 10.5 6.300000000000068"><path d="M0 0 H10.5 L5.25 6.300000000000068 Z" fill="#000"/></svg>
<div class="t" style="top:774.51px;font-size:24.8px;line-height:24.8px;color:#4d4c80;letter-spacing:0.65px;left:1436.00px;">Progress</div>
<div class="t" style="top:834.12px;font-size:21px;line-height:21px;color:#555;letter-spacing:0.8px;right:2534.20px;">id</div>
<div class="t" style="top:838.10px;font-size:15px;line-height:15px;color:#666;left:314.50px;">#</div>
<div class="t" style="top:834.12px;font-size:21px;line-height:21px;color:#555;letter-spacing:0.8px;left:344.50px;">24</div>
<div class="t" style="top:889.12px;font-size:21px;line-height:21px;color:#555;letter-spacing:1.0px;right:2577.80px;">project</div>
<div class="b" style="left:257px;top:880px;width:40px;height:39px;background:#87ceeb;border:1px solid #9a9a9a;border-radius:7px;"></div>
<div class="b" style="left:304px;top:880px;width:1075px;height:39.5px;background:#fff;border:1px solid #d3d3d3;border-radius:7px;border-left:4.5px solid #f00;"></div>
<div class="t" style="top:889.22px;font-size:21px;line-height:21px;color:#555;letter-spacing:0.95px;left:320.00px;">_project one - developement</div>
<div class="b" style="left:1345px;top:884px;width:1px;height:30px;background:#ababab;"></div>
<svg style="left:1355px;top:894.8px" width="11.5" height="6.5" viewBox="0 0 11.5 6.5"><path d="M0 0 H11.5 L5.75 6.5 Z" fill="#000"/></svg>
<div class="t" style="top:945.22px;font-size:21px;line-height:21px;color:#555;letter-spacing:0.8px;right:2533.60px;">element</div>
<div class="b" style="left:304px;top:936.5px;width:543px;height:38.0px;background:#fff;border:1px solid #d3d3d3;border-radius:7px;border-left:4.5px solid #f00;"></div>
<div class="t" style="top:945.02px;font-size:21px;line-height:21px;color:#555;letter-spacing:0.9px;left:320.30px;">Activity</div>
<div class="b" style="left:851.4px;top:936.5px;width:113.10000000000002px;height:38.0px;background:#fff;border:1px solid #d3d3d3;border-radius:7px;border-left:4.5px solid #f00;"></div>
<div class="t" style="top:945.02px;font-size:21px;line-height:21px;color:#555;right:1871.60px;">2</div>
<div class="t" style="top:985.22px;font-size:21px;line-height:21px;color:#000;letter-spacing:0.65px;left:322.60px;">Evolution X</div>
<div class="t" style="top:1030.22px;font-size:21px;line-height:21px;color:#555;letter-spacing:0.6px;right:2578.80px;">resource</div>
<div class="b" style="left:255px;top:1016px;width:45px;height:45px;border-radius:50%;background:#2c3e50;"></div>
<div class="t" style="top:1020.68px;font-size:37px;line-height:37px;color:#fff;left:-322.50px;width:1200px;text-align:center;">A</div>
<div class="b" style="left:304.5px;top:1021.5px;width:685.5px;height:39.0px;background:#fff;border:1px solid #d3d3d3;border-radius:7px;border-left:4.5px solid #f00;"></div>
<div class="t" style="top:1030.22px;font-size:21px;line-height:21px;color:#555;letter-spacing:0.85px;left:320.70px;">analyst A</div>
<div class="b" style="left:957px;top:1025px;width:1px;height:30.5px;background:#ababab;"></div>
<svg style="left:966px;top:1036px" width="11.5" height="6.5" viewBox="0 0 11.5 6.5"><path d="M0 0 H11.5 L5.75 6.5 Z" fill="#000"/></svg>
<div class="b" style="left:1000.3px;top:1021.5px;width:376.70000000000005px;height:39.0px;background:#efeef5;border:1px solid #dddce6;border-radius:8px;"></div>
<svg style="left:1010px;top:1022px" width="40" height="36" viewBox="1010 1022 40 36" fill="none" stroke="#3c3b8a" stroke-width="1.3">
<path d="M1017.5 1034.5 V1029 H1038.3 V1050.2 H1017.5 V1044.2"/>
<path d="M1017.5 1036.9 H1028.8 V1033.9 L1033.6 1039.2 L1028.8 1044.6 V1041.5 H1017.5 Z"/>
</svg>
<div class="t" style="top:1027.82px;font-size:21px;line-height:21px;color:#4d4c80;letter-spacing:0.85px;left:1046.60px;">assign to me</div>
<div class="t" style="top:1086.22px;font-size:21px;line-height:21px;color:#555;letter-spacing:0.8px;right:2533.90px;">function</div>
<div class="b" style="left:304.5px;top:1077.3px;width:1071.0px;height:38.200000000000045px;background:#fff;border:1px solid #d3d3d3;border-radius:7px;"></div>
<div class="t" style="top:1086.22px;font-size:21px;line-height:21px;color:#555;letter-spacing:0.85px;left:317.50px;">Analyste</div>
<div class="b" style="left:1342px;top:1081px;width:1px;height:30px;background:#ababab;"></div>
<svg style="left:1352px;top:1092px" width="11.5" height="6.5" viewBox="0 0 11.5 6.5"><path d="M0 0 H11.5 L5.75 6.5 Z" fill="#000"/></svg>
<div class="t" style="top:1141.22px;font-size:21px;line-height:21px;color:#555;letter-spacing:0.8px;right:2533.90px;">new daily cost</div>
<div class="b" style="left:304.5px;top:1132.3px;width:166.0px;height:38.700000000000045px;background:#efefef;border:1px solid #d3d3d3;border-radius:7px;"></div>
<div class="t" style="top:1141.22px;font-size:21px;line-height:21px;color:#555;letter-spacing:0.5px;right:2365.80px;">300</div>
<div class="t" style="top:1141.72px;font-size:21px;line-height:21px;color:#000;left:474.60px;">€</div>
<div class="t" style="top:1198.02px;font-size:21px;line-height:21px;color:#555;letter-spacing:1.55px;right:2533.15px;">rate (%)</div>
<div class="b" style="left:304.5px;top:1188.3px;width:124.0px;height:38.0px;background:#fff;border:1px solid #d3d3d3;border-radius:7px;"></div>
<div class="t" style="top:1198.02px;font-size:21px;line-height:21px;color:#555;letter-spacing:0.5px;right:2407.20px;">100</div>
<div class="t" style="top:1252.22px;font-size:21px;line-height:21px;color:#555;letter-spacing:0.8px;right:2533.90px;">comments</div>
<div class="b" style="left:304.5px;top:1243.4px;width:1070.0px;height:42.59999999999991px;background:#fff;border:1px solid #d3d3d3;border-radius:7px;"></div>
<div class="t" style="top:1311.22px;font-size:21px;line-height:21px;color:#555;letter-spacing:0.1px;right:2534.60px;">closed</div>
<div class="b" style="left:304.5px;top:1309.8px;width:25.5px;height:25.200000000000045px;background:#fff;border:1px solid #c8c8c8;border-radius:5px;"></div>
<div class="b" style="left:1411px;top:830px;width:1362px;height:41px;background:#efeef5;border:1px solid #8a8a8a;"></div>
<div class="t" style="top:841.22px;font-size:21px;line-height:21px;color:#4d4c80;letter-spacing:0.8px;left:1492.40px;width:1200px;text-align:center;">Dates</div>
<div class="t" style="top:881.22px;font-size:21px;line-height:21px;color:#5c5c5c;font-weight:bold;left:1552.40px;-webkit-text-stroke:0.6px #5c5c5c;transform:scaleX(1.10);transform-origin:0 0;">planned</div>
<div class="t" style="top:881.22px;font-size:21px;line-height:21px;color:#5c5c5c;font-weight:bold;left:1699.00px;-webkit-text-stroke:0.6px #5c5c5c;transform:scaleX(1.14);transform-origin:0 0;">real</div>
<div class="t" style="top:917.22px;font-size:21px;line-height:21px;color:#555;letter-spacing:1.1px;right:1283.40px;">start date</div>
<div class="t" style="top:971.82px;font-size:21px;line-height:21px;color:#555;letter-spacing:0.8px;right:1283.70px;">end date</div>
<div class="b" style="left:1552.3px;top:910.4px;width:144.70000000000005px;height:39.30000000000007px;background:#efefef;border:1px solid #d3d3d3;border-radius:7px;"></div>
<div class="b" style="left:1700.3px;top:910.4px;width:143.70000000000005px;height:39.30000000000007px;background:#efefef;border:1px solid #d3d3d3;border-radius:7px;"></div>
<div class="b" style="left:1552.3px;top:965.2px;width:144.70000000000005px;height:39.09999999999991px;background:#efefef;border:1px solid #d3d3d3;border-radius:7px;"></div>
<div class="b" style="left:1700.3px;top:965.2px;width:143.70000000000005px;height:39.09999999999991px;background:#efefef;border:1px solid #d3d3d3;border-radius:7px;"></div>
<div class="b" style="left:1411px;top:1025.3px;width:1362px;height:40.700000000000045px;background:#efeef5;border:1px solid #8a8a8a;"></div>
<div class="t" style="top:1036.62px;font-size:21px;line-height:21px;color:#4d4c80;letter-spacing:0.85px;left:1492.42px;width:1200px;text-align:center;">Costs and workload</div>
<div class="t" style="top:1076.22px;font-size:21px;line-height:21px;color:#5c5c5c;font-weight:bold;left:1552.40px;-webkit-text-stroke:0.6px #5c5c5c;transform:scaleX(1.08);transform-origin:0 0;">assigned</div>
<div class="t" style="top:1076.22px;font-size:21px;line-height:21px;color:#5c5c5c;font-weight:bold;left:1741.60px;-webkit-text-stroke:0.6px #5c5c5c;transform:scaleX(1.16);transform-origin:0 0;">real</div>
<div class="t" style="top:1076.22px;font-size:21px;line-height:21px;color:#5c5c5c;font-weight:bold;left:1931.40px;-webkit-text-stroke:0.6px #5c5c5c;transform:scaleX(1.16);transform-origin:0 0;">left</div>
<div class="t" style="top:1076.22px;font-size:21px;line-height:21px;color:#5c5c5c;font-weight:bold;left:2120.90px;-webkit-text-stroke:0.6px #5c5c5c;transform:scaleX(1.12);transform-origin:0 0;">revised</div>
<div class="t" style="top:1112.12px;font-size:21px;line-height:21px;color:#555;letter-spacing:0.8px;right:1283.50px;">work</div>
<div class="t" style="top:1165.92px;font-size:21px;line-height:21px;color:#555;letter-spacing:0.8px;right:1283.50px;">cost</div>
<div class="b" style="left:1552.3px;top:1105.4px;width:124.20000000000005px;height:39.19999999999982px;background:#fff;border:1px solid #d3d3d3;border-radius:7px;"></div>
<div class="t" style="top:1114.99px;font-size:19.5px;line-height:19.5px;color:#555;right:1159.30px;">0</div>
<div class="t" style="top:1115.42px;font-size:21px;line-height:21px;color:#000;left:1680.90px;">d</div>
<div class="b" style="left:1742px;top:1105.4px;width:124.5px;height:39.19999999999982px;background:#efefef;border:1px solid #d3d3d3;border-radius:7px;"></div>
<div class="t" style="top:1114.99px;font-size:19.5px;line-height:19.5px;color:#555;right:969.30px;">0</div>
<div class="t" style="top:1115.42px;font-size:21px;line-height:21px;color:#000;left:1870.90px;">d</div>
<div class="b" style="left:1932px;top:1105.4px;width:124.59999999999991px;height:39.19999999999982px;background:#fff;border:1px solid #d3d3d3;border-radius:7px;"></div>
<div class="t" style="top:1114.99px;font-size:19.5px;line-height:19.5px;color:#555;right:779.20px;">0</div>
<div class="t" style="top:1115.42px;font-size:21px;line-height:21px;color:#000;left:2061.00px;">d</div>
<div class="b" style="left:2121.5px;top:1105.4px;width:124.30000000000018px;height:39.19999999999982px;background:#efefef;border:1px solid #d3d3d3;border-radius:7px;"></div>
<div class="t" style="top:1114.99px;font-size:19.5px;line-height:19.5px;color:#555;right:590.00px;">0</div>
<div class="t" style="top:1115.42px;font-size:21px;line-height:21px;color:#000;left:2250.20px;">d</div>
<div class="b" style="left:1552.3px;top:1160.3px;width:166.29999999999995px;height:38.299999999999955px;background:#efefef;border:1px solid #d3d3d3;border-radius:7px;"></div>
<div class="t" style="top:1170.22px;font-size:21px;line-height:21px;color:#000;left:1722.20px;">€</div>
<div class="b" style="left:1742px;top:1160.3px;width:166.5px;height:38.299999999999955px;background:#efefef;border:1px solid #d3d3d3;border-radius:7px;"></div>
<div class="t" style="top:1170.22px;font-size:21px;line-height:21px;color:#000;left:1912.10px;">€</div>
<div class="b" style="left:1932px;top:1160.3px;width:166.5px;height:38.299999999999955px;background:#efefef;border:1px solid #d3d3d3;border-radius:7px;"></div>
<div class="t" style="top:1170.22px;font-size:21px;line-height:21px;color:#000;left:2102.10px;">€</div>
<div class="b" style="left:2121.5px;top:1160.3px;width:166.0px;height:38.299999999999955px;background:#efefef;border:1px solid #d3d3d3;border-radius:7px;"></div>
<div class="t" style="top:1170.22px;font-size:21px;line-height:21px;color:#000;left:2291.10px;">€</div>
<svg style="left:1575px;top:1350px" width="30" height="36" viewBox="1575 1350 30 36">
<path d="M1581.5 1354.5 V1377.6 L1586.4 1373.2 L1590 1380.4 L1594.4 1378.6 L1591.2 1372 H1598.6 Z" fill="#fff" stroke="#15151f" stroke-width="1.5" stroke-linejoin="round"/>
</svg>
</body></html>
